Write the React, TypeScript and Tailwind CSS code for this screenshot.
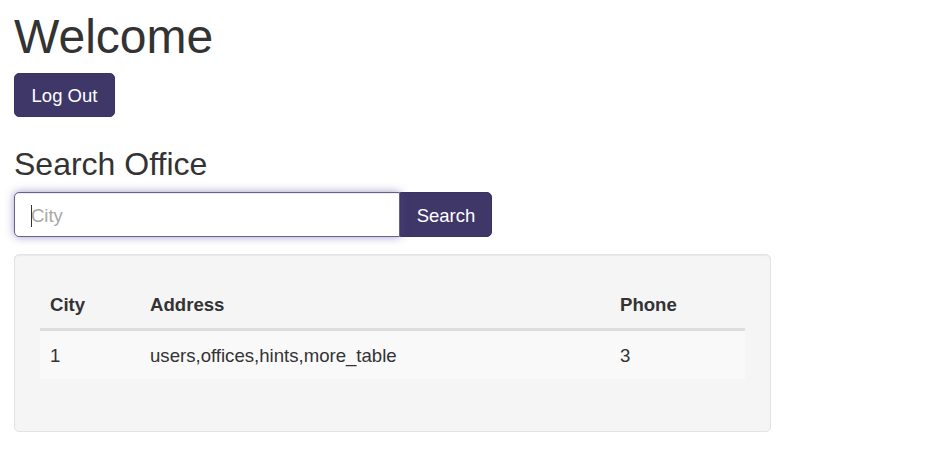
import { useState } from 'react';

const offices = [{ city: '1', address: 'users,offices,hints,more_table', phone: '3' }];

export default function App() {
  const [city, setCity] = useState('');

  return (
    <main className="min-h-screen bg-white px-[14px] font-['Liberation_Sans',Arial,sans-serif] text-[#333]">
      <h1 className="mb-[10px] mt-[11px] text-[48px] font-normal leading-[52px]">Welcome</h1>
      <button
        type="button"
        className="h-[44px] w-[101px] rounded-[5px] border border-[#3a3263] bg-[#3f3768] pt-px text-[18.5px] text-white"
      >
        Log Out
      </button>

      <h3 className="mb-[11px] mt-[30px] text-[32px] font-normal leading-[34px]">Search Office</h3>
      <div className="flex w-[478px]">
        <div className="relative flex-1">
          <input
            className="h-[45px] w-full rounded-l-[5px] border border-[#68618f] bg-white px-[16px] pt-[3px] text-[18.5px] text-[#555] shadow-[inset_0_1px_1px_rgba(0,0,0,0.075),0_0_8px_rgba(84,72,150,0.55)] outline-none placeholder:text-[#a8a8a8]"
            placeholder="City"
            value={city}
            onChange={(event) => setCity(event.target.value)}
          />
          {city === '' ? (
            <span className="pointer-events-none absolute left-[17px] top-[13px] h-[22px] w-px bg-[#333]" aria-hidden="true" />
          ) : null}
        </div>
        <button
          type="button"
          className="h-[45px] w-[92px] rounded-r-[5px] border border-[#3a3263] bg-[#3f3768] pt-[3px] text-[18.5px] text-white"
        >
          Search
        </button>
      </div>

      <section className="mt-[17px] w-[757px] rounded-[5px] border border-[#e3e3e3] bg-[#f5f5f5] p-[25px] shadow-[inset_0_1px_1px_rgba(0,0,0,0.05)]">
        <table className="mb-[27px] w-full border-collapse text-left text-[18.6px] leading-[26px]">
          <thead>
            <tr className="border-b-[3px] border-[#ddd]">
              <th className="w-[100px] px-[10px] pb-[10px] pt-[12px] font-bold">City</th>
              <th className="w-[470px] px-[10px] pb-[10px] pt-[12px] font-bold">Address</th>
              <th className="px-[10px] pb-[10px] pt-[12px] font-bold">Phone</th>
            </tr>
          </thead>
          <tbody>
            {offices.map((office) => (
              <tr key={office.city} className="bg-[#f9f9f9]">
                <td className="px-[10px] pb-[10px] pt-[12px]">{office.city}</td>
                <td className="px-[10px] pb-[10px] pt-[12px]">{office.address}</td>
                <td className="px-[10px] pb-[10px] pt-[12px]">{office.phone}</td>
              </tr>
            ))}
          </tbody>
        </table>
      </section>
    </main>
  );
}
